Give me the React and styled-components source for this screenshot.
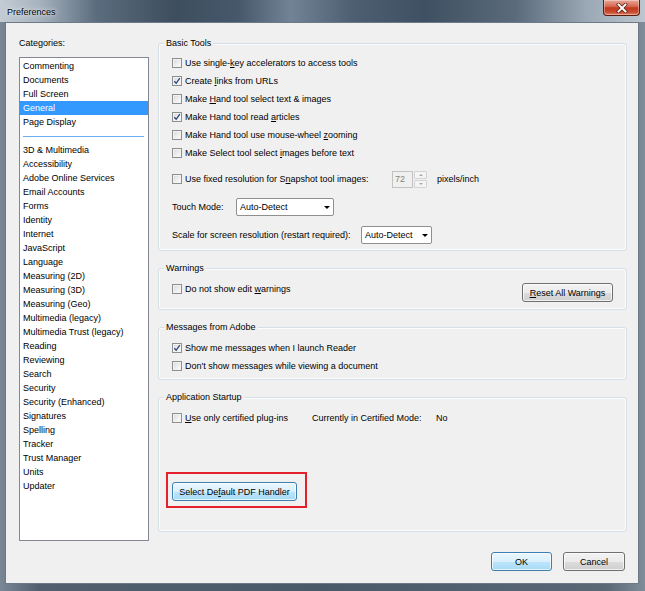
import styled, { createGlobalStyle } from 'styled-components';

const GlobalStyle = createGlobalStyle`
  html, body {
    margin: 0;
    padding: 0;
    background: #fff;
  }
  body {
    font-family: "Liberation Sans", Arial, sans-serif;
    font-size: 9px;
    color: #000;
  }
  * {
    box-sizing: border-box;
  }
`;

const Window = styled.div`
  width: 645px;
  height: 591px;
  display: flex;
  flex-direction: column;
  background: linear-gradient(to right, #7a8896, #515f6e 6%, #4a5968 50%, #5a6876 94%, #7f8c99);
`;

const TitleBar = styled.div`
  height: 22px;
  display: flex;
  align-items: flex-start;
  justify-content: space-between;
  padding: 0 5px 0 7px;
  background: linear-gradient(
    to right,
    #c3ccd5 0%,
    #a7b3bf 6%,
    #5b6c7e 15%,
    #3e4e5f 27%,
    #46586b 37%,
    #728395 45%,
    #4d5e70 55%,
    #3f5062 66%,
    #5b6b7c 80%,
    #9ba8b5 91%,
    #bcc6d0 100%
  );
`;

const Title = styled.span`
  line-height: 22px;
  padding-top: 1px;
  color: #000;
  text-shadow: 0 0 6px rgba(255, 255, 255, 0.9), 0 0 2px rgba(255, 255, 255, 0.8);
`;

const CloseButton = styled.div`
  width: 37px;
  height: 16px;
  display: flex;
  align-items: center;
  justify-content: center;
  border: 1px solid #5d1c12;
  border-top: none;
  border-radius: 0 0 4px 4px;
  background: linear-gradient(#e8a898, #d86a52 42%, #c13a1e 52%, #c84a2e 80%, #de8266);
  box-shadow: inset 0 0 0 1px rgba(255, 255, 255, 0.35);
`;

const Frame = styled.div`
  flex: 1;
  display: flex;
  padding: 0 6px 7px 5px;
`;

const Client = styled.div`
  flex: 1;
  display: flex;
  flex-direction: column;
  background: #f0f0f0;
  border: 1px solid #6c7a88;
  padding: 14px 11px 0 13px;
`;

const Main = styled.div`
  display: flex;
  align-items: flex-start;
  gap: 9px;
`;

const LeftCol = styled.div`
  width: 130px;
  display: flex;
  flex-direction: column;
`;

const CategoryLabel = styled.div`
  line-height: 12px;
  margin-bottom: 8px;
`;

const ListBox = styled.div`
  height: 484px;
  border: 1px solid #828790;
  background: #fff;
  padding-top: 1px;
`;

const ListItem = styled.div`
  height: 14px;
  line-height: 14px;
  padding-left: 3px;
  white-space: nowrap;
  background: ${(p) => (p.$selected ? '#3399ff' : 'transparent')};
  color: ${(p) => (p.$selected ? '#fff' : '#000')};
`;

const ListSeparator = styled.div`
  height: 14px;
  display: flex;
  align-items: center;
  padding: 0 4px 0 3px;
  &::after {
    content: '';
    flex: 1;
    height: 1px;
    background: #6aaff0;
  }
`;

const RightCol = styled.div`
  width: 469px;
  margin-top: 6px;
  display: flex;
  flex-direction: column;
  gap: 17px;
`;

const Group = styled.div`
  height: ${(p) => p.$h}px;
  display: flex;
  flex-direction: column;
  border: 1px solid #d5dfe5;
  border-radius: 3px;
  box-shadow: inset 0 0 0 1px #fbfcfd;
`;

const Legend = styled.div`
  align-self: flex-start;
  margin: -6px 0 0 5px;
  padding: 0 2px;
  line-height: 11px;
  background: #f0f0f0;
`;

const GroupBody = styled.div`
  display: flex;
  flex-direction: column;
  padding: ${(p) => p.$top}px 13px 0 13px;
`;

const Row = styled.div`
  height: ${(p) => p.$h || 18}px;
  margin-top: ${(p) => p.$mt || 0}px;
  display: flex;
  align-items: ${(p) => p.$align || 'center'};
  justify-content: ${(p) => p.$justify || 'flex-start'};
`;

const CheckLabel = styled.label`
  display: flex;
  align-items: center;
  gap: 2px;
  height: 12px;
  line-height: 12px;
  white-space: nowrap;
  width: ${(p) => (p.$w ? `${p.$w}px` : 'auto')};
  flex-shrink: 0;
`;

const Box = styled.span`
  width: 10px;
  height: 10px;
  display: flex;
  align-items: center;
  justify-content: center;
  border: 1px solid #8e8f8f;
  background: linear-gradient(135deg, #d8d8d8, #f4f4f4 70%, #fdfdfd);
  box-shadow: inset 0 0 0 1px #f2f2f2;
  margin-right: 1px;
`;

const FieldLabel = styled.span`
  width: ${(p) => p.$w}px;
  flex-shrink: 0;
  white-space: nowrap;
`;

const Combo = styled.div`
  width: ${(p) => p.$w}px;
  height: 18px;
  display: flex;
  align-items: center;
  border: 1px solid #8e8f8f;
  border-radius: 2px;
  background: #fff;
`;

const ComboText = styled.span`
  flex: 1;
  padding-left: 3px;
  white-space: nowrap;
`;

const ComboArrow = styled.span`
  width: 13px;
  height: 100%;
  display: flex;
  align-items: center;
  justify-content: center;
  &::after {
    content: '';
    border-left: 3px solid transparent;
    border-right: 3px solid transparent;
    border-top: 3px solid #000;
  }
`;

const SpinInput = styled.div`
  width: 21px;
  height: 17px;
  border: 1px solid #c2c2c2;
  background: #f0f0f0;
  color: #838383;
  line-height: 15px;
  padding-left: 2px;
`;

const SpinButtons = styled.div`
  width: 13px;
  height: 17px;
  margin-left: 1px;
  display: flex;
  flex-direction: column;
  gap: 1px;
`;

const SpinButton = styled.span`
  flex: 1;
  display: flex;
  align-items: center;
  justify-content: center;
  border: 1px solid #d3d3d3;
  border-radius: 1px;
  background: #f4f4f4;
  &::after {
    content: '';
    border-left: 2px solid transparent;
    border-right: 2px solid transparent;
    ${(p) => (p.$up ? 'border-bottom' : 'border-top')}: 2px solid #a9a9a9;
  }
`;

const Unit = styled.span`
  margin-left: 10px;
`;

const Button = styled.div`
  width: ${(p) => p.$w}px;
  height: 19px;
  display: flex;
  align-items: center;
  justify-content: center;
  white-space: nowrap;
  border: 1px solid ${(p) => (p.$blue ? '#3c7fb1' : '#707070')};
  border-radius: 3px;
  background: ${(p) =>
    p.$blue
      ? 'linear-gradient(#eaf6fd, #d9f0fc 50%, #bee6fd 51%, #a7d9f5)'
      : 'linear-gradient(#f2f2f2, #ebebeb 50%, #dddddd 51%, #cfcfcf)'};
  box-shadow: inset 0 0 0 1px rgba(255, 255, 255, 0.7);
`;

const Highlight = styled.div`
  align-self: flex-start;
  margin: 45px 0 0 -6px;
  width: 141px;
  height: 36px;
  border: 2px solid #e3202b;
  padding: 8px 0 0 4px;
`;

const StatusText = styled.span`
  width: ${(p) => (p.$w ? `${p.$w}px` : 'auto')};
  white-space: nowrap;
`;

const Footer = styled.div`
  display: flex;
  justify-content: flex-end;
  gap: 11px;
  margin-top: 11px;
  padding-right: 2px;
`;

const categoriesTop = ['Commenting', 'Documents', 'Full Screen', 'General', 'Page Display'];
const categoriesRest = [
  '3D & Multimedia',
  'Accessibility',
  'Adobe Online Services',
  'Email Accounts',
  'Forms',
  'Identity',
  'Internet',
  'JavaScript',
  'Language',
  'Measuring (2D)',
  'Measuring (3D)',
  'Measuring (Geo)',
  'Multimedia (legacy)',
  'Multimedia Trust (legacy)',
  'Reading',
  'Reviewing',
  'Search',
  'Security',
  'Security (Enhanced)',
  'Signatures',
  'Spelling',
  'Tracker',
  'Trust Manager',
  'Units',
  'Updater',
];

const CheckItem = ({ checked, w, children }) => (
  <CheckLabel $w={w}>
    <Box>
      {checked && (
        <svg width="8" height="8" viewBox="0 0 8 8">
          <path d="M1.3 4.2 L3.2 6.3 L6.8 1.2" fill="none" stroke="#2b4377" strokeWidth="1.3" />
        </svg>
      )}
    </Box>
    <span>{children}</span>
  </CheckLabel>
);

const CloseGlyph = () => (
  <svg width="12" height="10" viewBox="0 0 12 10">
    <path d="M2.5 1.5 L9.5 8.5 M9.5 1.5 L2.5 8.5" stroke="#5a2218" strokeWidth="3.4" strokeLinecap="square" />
    <path d="M2.5 1.5 L9.5 8.5 M9.5 1.5 L2.5 8.5" stroke="#fff" strokeWidth="1.9" strokeLinecap="square" />
  </svg>
);

const App = () => {
  return (
    <>
      <GlobalStyle />
      <Window>
        <TitleBar>
          <Title>Preferences</Title>
          <CloseButton>
            <CloseGlyph />
          </CloseButton>
        </TitleBar>
        <Frame>
          <Client>
            <Main>
              <LeftCol>
                <CategoryLabel>Categories:</CategoryLabel>
                <ListBox>
                  {categoriesTop.map((c) => (
                    <ListItem key={c} $selected={c === 'General'}>
                      {c}
                    </ListItem>
                  ))}
                  <ListSeparator />
                  {categoriesRest.map((c) => (
                    <ListItem key={c}>{c}</ListItem>
                  ))}
                </ListBox>
              </LeftCol>

              <RightCol>
                <Group $h={208}>
                  <Legend>Basic Tools</Legend>
                  <GroupBody $top={5}>
                    <Row>
                      <CheckItem>
                        Use single-<u>k</u>ey accelerators to access tools
                      </CheckItem>
                    </Row>
                    <Row>
                      <CheckItem checked>
                        Create <u>l</u>inks from URLs
                      </CheckItem>
                    </Row>
                    <Row>
                      <CheckItem>
                        Make <u>H</u>and tool select text &amp; images
                      </CheckItem>
                    </Row>
                    <Row>
                      <CheckItem checked>
                        Make Hand tool read <u>a</u>rticles
                      </CheckItem>
                    </Row>
                    <Row>
                      <CheckItem>
                        Make Hand tool use mouse-wheel <u>z</u>ooming
                      </CheckItem>
                    </Row>
                    <Row>
                      <CheckItem>
                        Make Select tool select <u>i</u>mages before text
                      </CheckItem>
                    </Row>
                    <Row $mt={8}>
                      <CheckItem w={220}>
                        Use fixed resolution for S<u>n</u>apshot tool images:
                      </CheckItem>
                      <SpinInput>72</SpinInput>
                      <SpinButtons>
                        <SpinButton $up />
                        <SpinButton />
                      </SpinButtons>
                      <Unit>pixels/inch</Unit>
                    </Row>
                    <Row $mt={10}>
                      <FieldLabel $w={64}>Touch Mode:</FieldLabel>
                      <Combo $w={98}>
                        <ComboText>Auto-Detect</ComboText>
                        <ComboArrow />
                      </Combo>
                    </Row>
                    <Row $mt={10}>
                      <FieldLabel $w={189}>Scale for screen resolution (restart required):</FieldLabel>
                      <Combo $w={71}>
                        <ComboText>Auto-Detect</ComboText>
                        <ComboArrow />
                      </Combo>
                    </Row>
                  </GroupBody>
                </Group>

                <Group $h={42}>
                  <Legend>Warnings</Legend>
                  <GroupBody $top={9}>
                    <Row $h={19} $align="flex-start" $justify="space-between">
                      <CheckItem>
                        Do not show edit <u>w</u>arnings
                      </CheckItem>
                      <Button $w={91}>
                        <span>
                          <u>R</u>eset All Warnings
                        </span>
                      </Button>
                    </Row>
                  </GroupBody>
                </Group>

                <Group $h={53}>
                  <Legend>Messages from Adobe</Legend>
                  <GroupBody $top={6}>
                    <Row>
                      <CheckItem checked>Show me messages when I launch Reader</CheckItem>
                    </Row>
                    <Row>
                      <CheckItem>Don't show messages while viewing a document</CheckItem>
                    </Row>
                  </GroupBody>
                </Group>

                <Group $h={135}>
                  <Legend>Application Startup</Legend>
                  <GroupBody $top={6}>
                    <Row>
                      <CheckItem w={140}>
                        <u>U</u>se only certified plug-ins
                      </CheckItem>
                      <StatusText $w={124}>Currently in Certified Mode:</StatusText>
                      <StatusText>No</StatusText>
                    </Row>
                    <Highlight>
                      <Button $w={125} $blue>
                        <span>
                          Select De<u>f</u>ault PDF Handler
                        </span>
                      </Button>
                    </Highlight>
                  </GroupBody>
                </Group>
              </RightCol>
            </Main>

            <Footer>
              <Button $w={61} $blue>
                OK
              </Button>
              <Button $w={62}>Cancel</Button>
            </Footer>
          </Client>
        </Frame>
      </Window>
    </>
  );
};

export default App;
